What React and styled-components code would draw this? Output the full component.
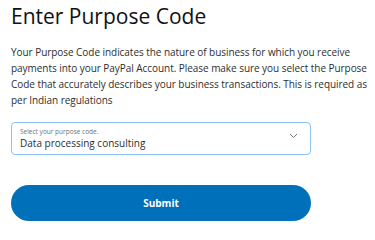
import React from 'react'
import styled, { createGlobalStyle } from 'styled-components'

const GlobalStyle = createGlobalStyle`
  body {
    margin: 0;
    background: #ffffff;
    font-family: "Open Sans", "Noto Sans", sans-serif;
    color: #2c2e2f;
  }
`

const Page = styled.div`
  display: flex;
  flex-direction: column;
  padding: 2px 0 0 11px;
`

const Title = styled.h1`
  margin: 0;
  font-size: 21px;
  line-height: 28px;
  font-weight: 400;
  color: #111111;
`

const Intro = styled.p`
  margin: 14px 0 0;
  font-size: 10px;
  line-height: 16px;
  letter-spacing: -0.05px;
  color: #2c2e2f;
`

const SelectBox = styled.div`
  position: relative;
  width: 300px;
  height: 33px;
  box-sizing: border-box;
  margin-top: 14px;
  border: 1.5px solid #8cc3f3;
  border-radius: 4px;
  padding: 4px 8px 0;
  display: flex;
  flex-direction: column;
`

const SelectLabel = styled.span`
  font-size: 6.5px;
  line-height: 9px;
  color: #6c7378;
`

const SelectValue = styled.span`
  font-size: 10px;
  line-height: 14px;
  color: #2c2e2f;
`

const Chevron = styled.svg`
  position: absolute;
  right: 12px;
  top: 10px;
  width: 9px;
  height: 6px;
`

const SubmitButton = styled.button`
  margin-top: 30px;
  width: 300px;
  height: 36px;
  border: none;
  border-radius: 18px;
  background: #0070ba;
  color: #ffffff;
  font-family: "Open Sans", "Noto Sans", sans-serif;
  font-size: 10px;
  font-weight: 700;
  cursor: pointer;
`

export default function App() {
  return (
    <>
      <GlobalStyle />
      <Page>
        <Title>Enter Purpose Code</Title>
        <Intro>
          Your Purpose Code indicates the nature of business for which you receive payments into
          your PayPal Account. Please make sure you select the Purpose Code that accurately
          describes your business transactions. This is required as per Indian regulations
        </Intro>
        <SelectBox>
          <SelectLabel>Select your purpose code.</SelectLabel>
          <SelectValue>Data processing consulting</SelectValue>
          <Chevron viewBox="0 0 9 6">
            <path d="M1 1l3.5 3.5L8 1" fill="none" stroke="#6c7378" strokeWidth="1" />
          </Chevron>
        </SelectBox>
        <SubmitButton>Submit</SubmitButton>
      </Page>
    </>
  )
}
